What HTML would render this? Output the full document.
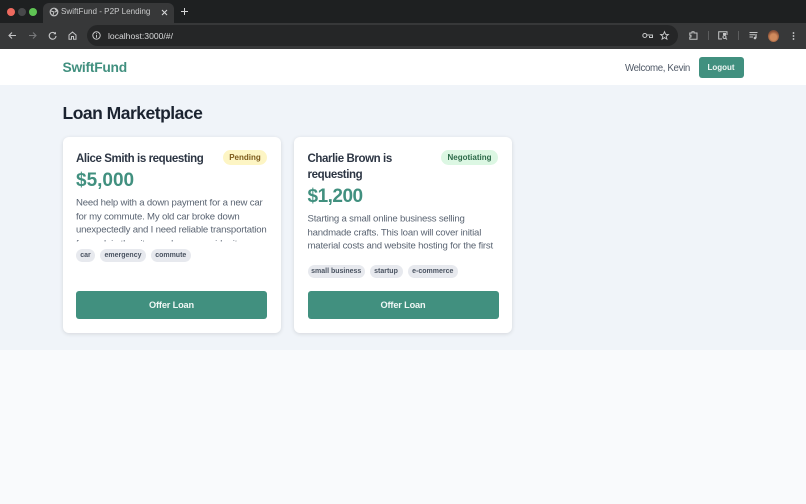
<!DOCTYPE html>
<html>
<head>
<meta charset="utf-8">
<style>
html,body{margin:0;padding:0;width:806px;height:504px;overflow:hidden;background:#f9fafc;font-family:"Liberation Sans",sans-serif;}
.a{position:absolute;white-space:nowrap;}
svg{position:absolute;overflow:visible;}
.card{position:absolute;top:137px;width:218px;height:196px;background:#fff;border-radius:6px;box-shadow:0 1px 4px rgba(0,0,0,.12);}
.title{position:absolute;left:13.5px;top:14px;font-size:11.5px;font-weight:bold;line-height:16px;color:#2d3644;letter-spacing:-.4px;white-space:nowrap;}
.amt{position:absolute;left:13.5px;font-size:19px;font-weight:bold;color:#41907f;line-height:24px;}
.desc{position:absolute;left:13.5px;width:200px;overflow:hidden;font-size:9.6px;line-height:13.5px;color:#5a6472;white-space:nowrap;letter-spacing:-.19px;}
.tag{position:absolute;height:13px;line-height:14px;background:#e7e9ee;border-radius:7px;font-size:7px;font-weight:bold;color:#4a5361;text-align:center;}
.btn{position:absolute;left:13.5px;top:154px;width:191px;height:28px;line-height:29px;background:#41907f;border-radius:3px;color:#f0f7f5;font-size:9.2px;letter-spacing:-.15px;font-weight:bold;text-align:center;}
.badge{position:absolute;top:13px;height:15px;line-height:15px;border-radius:8px;font-size:8px;font-weight:bold;text-align:center;}
</style>
</head>
<body>
<!-- browser chrome -->
<div class="a" style="left:0;top:0;width:806px;height:23px;background:#1e2021;"></div>
<div class="a" style="left:0;top:23px;width:806px;height:26px;background:#373839;"></div>
<div class="a" style="left:43px;top:3px;width:131px;height:20px;background:#373839;border-radius:6px 6px 0 0;"></div>
<div class="a" style="left:7px;top:8px;width:8px;height:8px;border-radius:50%;background:#ee6a5f;"></div>
<div class="a" style="left:18px;top:8px;width:8px;height:8px;border-radius:50%;background:#47484a;"></div>
<div class="a" style="left:29px;top:8px;width:8px;height:8px;border-radius:50%;background:#5fc454;"></div>
<svg style="left:49px;top:7px" width="10" height="10" viewBox="0 0 10 10"><circle cx="5" cy="5" r="3.8" fill="none" stroke="#c4c5c6" stroke-width="1.2"/><path d="M2 4 L5 5 L4 8 M6 2 L8 4 L6 5" fill="none" stroke="#c4c5c6" stroke-width="1"/></svg>
<div class="a" style="left:61px;top:6px;font-size:8.1px;line-height:12px;color:#c9cacb;">SwiftFund - P2P Lending</div>
<svg style="left:161px;top:8.500px" width="7" height="7" viewBox="0 0 7 7"><path d="M1 1 L6 6 M6 1 L1 6" stroke="#d5d6d7" stroke-width="1.1"/></svg>
<svg style="left:181px;top:8px" width="7" height="7" viewBox="0 0 7 7"><path d="M3.500 0 V7 M0 3.500 H7" stroke="#d5d6d7" stroke-width="1"/></svg>
<svg style="left:8px;top:31px" width="9" height="9" viewBox="0 0 9 9"><path d="M8 4.500 H1 M4 1.500 L1 4.500 L4 7.500" fill="none" stroke="#c4c5c6" stroke-width="1.1"/></svg>
<svg style="left:28px;top:31px" width="9" height="9" viewBox="0 0 9 9"><path d="M1 4.500 H8 M5 1.500 L8 4.500 L5 7.500" fill="none" stroke="#77787a" stroke-width="1.1"/></svg>
<svg style="left:48px;top:31px" width="9" height="9" viewBox="0 0 9 9"><path d="M7.500 3 A3.400 3.400 0 1 0 8 5" fill="none" stroke="#c4c5c6" stroke-width="1.1"/><path d="M8 0.800 V3.300 H5.500 Z" fill="#c4c5c6"/></svg>
<svg style="left:68px;top:31px" width="9" height="9" viewBox="0 0 9 9"><path d="M1 4 L4.500 1 L8 4 V8.300 H5.500 V5.500 H3.500 V8.300 H1 Z" fill="none" stroke="#c4c5c6" stroke-width="1"/></svg>
<div class="a" style="left:87px;top:25px;width:591px;height:21px;border-radius:11px;background:#252627;"></div>
<svg style="left:92px;top:31px" width="9" height="9" viewBox="0 0 9 9"><circle cx="4.500" cy="4.500" r="3.700" fill="none" stroke="#c4c5c6" stroke-width="1"/><path d="M4.500 4 V6.700 M4.500 2.300 V3.200" stroke="#c4c5c6" stroke-width="1"/></svg>
<div class="a" style="left:108px;top:29.500px;font-size:8.6px;line-height:12px;color:#d7d8d9;">localhost:3000/#/</div>
<svg style="left:642px;top:32px" width="11" height="7" viewBox="0 0 11 7"><circle cx="2.800" cy="3.500" r="2" fill="none" stroke="#c4c5c6" stroke-width="1"/><path d="M5 3 H10.500 V5.500 H7.500 V4" fill="none" stroke="#c4c5c6" stroke-width="1"/></svg>
<svg style="left:660px;top:31px" width="9" height="9" viewBox="0 0 10 10"><path d="M5 .8 L6.200 3.700 L9.300 3.900 L6.900 5.900 L7.700 9 L5 7.300 L2.300 9 L3.100 5.900 L.7 3.900 L3.800 3.700 Z" fill="none" stroke="#c9cacb" stroke-width="1"/></svg>
<svg style="left:689px;top:31px" width="9" height="9" viewBox="0 0 9 9"><path d="M.8 2 H3 V.8 H5 V2 H8 V8.300 H.8 V6 H2 V4.300 H.8 Z" fill="none" stroke="#c4c5c6" stroke-width="1"/></svg>
<div class="a" style="left:708px;top:31px;width:1px;height:9px;background:#5c5d5e;"></div>
<svg style="left:718px;top:31px" width="10" height="9" viewBox="0 0 10 9"><path d="M4 8 H.7 V.7 H9 V4" fill="none" stroke="#c4c5c6" stroke-width="1"/><rect x="5" y="2" width="3" height="2" fill="#c4c5c6"/><circle cx="6.500" cy="6" r="1.500" fill="none" stroke="#c4c5c6" stroke-width="1"/><path d="M7.500 7 L9 8.500" stroke="#c4c5c6" stroke-width="1"/></svg>
<div class="a" style="left:738px;top:31px;width:1px;height:9px;background:#5c5d5e;"></div>
<svg style="left:749px;top:31px" width="9" height="9" viewBox="0 0 9 9"><path d="M.5 1.500 H8.500 M.5 3.800 H6 M.5 6 H4" stroke="#c4c5c6" stroke-width="1"/><path d="M7 3 V7" stroke="#c4c5c6" stroke-width="1.200"/><circle cx="6" cy="7" r="1.300" fill="#c4c5c6"/></svg>
<div class="a" style="left:768px;top:30px;width:11px;height:12px;border-radius:50%;background:radial-gradient(circle at 50% 60%,#d08a5c 0 35%,#8c5238 65%,#5a4038 100%);"></div>
<svg style="left:792px;top:32px" width="3" height="9" viewBox="0 0 3 9"><circle cx="1.500" cy="1" r=".9" fill="#d5d6d7"/><circle cx="1.500" cy="4" r=".9" fill="#d5d6d7"/><circle cx="1.500" cy="7" r=".9" fill="#d5d6d7"/></svg>

<!-- app header -->
<div class="a" style="left:0;top:49px;width:806px;height:36px;background:#fff;"></div>
<div class="a" style="left:62.500px;top:59px;font-size:13.800px;line-height:17px;font-weight:bold;color:#41907f;letter-spacing:-.25px;">SwiftFund</div>
<div class="a" style="left:625px;top:61.500px;font-size:9.700px;line-height:13px;color:#4f5866;letter-spacing:-.35px;">Welcome, Kevin</div>
<div class="a" style="left:698.500px;top:56.500px;width:45px;height:21.500px;line-height:21.500px;background:#41907f;border-radius:3px;color:#f0f7f5;font-size:8px;font-weight:bold;text-align:center;">Logout</div>

<!-- main -->
<div class="a" style="left:0;top:85px;width:806px;height:265px;background:#f0f4f9;"></div>
<div class="a" style="left:62.500px;top:102px;font-size:17.500px;line-height:23px;font-weight:bold;color:#1b2330;letter-spacing:-.5px;">Loan Marketplace</div>

<div class="card" style="left:62.500px;">
  <div class="title">Alice Smith is requesting</div>
  <div class="badge" style="left:160.500px;width:44px;background:#fdf5c4;color:#7c5a1c;">Pending</div>
  <div class="amt" style="top:32px;">$5,000</div>
  <div class="desc" style="top:58px;padding-top:0;height:45px;transform:translateY(1.5px);">Need help with a down payment for a new car<br>for my commute. My old car broke down<br>unexpectedly and I need reliable transportation<br>for work in the city, so please consider it</div>
  <div class="tag" style="left:13.500px;top:111.500px;width:19px;">car</div>
  <div class="tag" style="left:37.500px;top:111.500px;width:46px;">emergency</div>
  <div class="tag" style="left:88.500px;top:111.500px;width:39.500px;">commute</div>
  <div class="btn">Offer Loan</div>
</div>

<div class="card" style="left:294px;">
  <div class="title">Charlie Brown is<br>requesting</div>
  <div class="badge" style="left:147px;width:57px;background:#dcf7e3;color:#2d6b4a;">Negotiating</div>
  <div class="amt" style="top:48px;letter-spacing:-.5px;">$1,200</div>
  <div class="desc" style="top:74px;height:42px;transform:translateY(1.5px);">Starting a small online business selling<br>handmade crafts. This loan will cover initial<br>material costs and website hosting for the first</div>
  <div class="tag" style="left:13.500px;top:127.500px;width:57.500px;">small business</div>
  <div class="tag" style="left:75.500px;top:127.500px;width:33px;">startup</div>
  <div class="tag" style="left:113.500px;top:127.500px;width:50.500px;">e-commerce</div>
  <div class="btn">Offer Loan</div>
</div>
</body>
</html>
